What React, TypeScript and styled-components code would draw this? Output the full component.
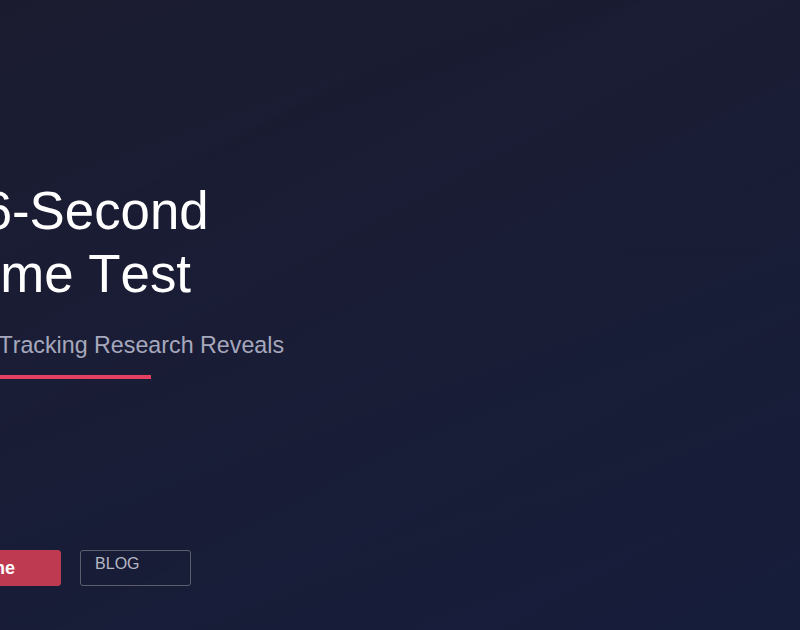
import React from 'react'
import styled, { createGlobalStyle } from 'styled-components'

const GlobalStyle = createGlobalStyle`
  html, body {
    margin: 0;
    padding: 0;
    height: 100%;
    overflow: hidden;
    background: #1a1c33;
  }
  #root {
    height: 100%;
  }
  * {
    box-sizing: border-box;
  }
`

const Hero = styled.section`
  position: relative;
  height: 630px;
  width: 800px;
  overflow: hidden;
  font-family: 'Liberation Sans', Arial, sans-serif;
  font-kerning: none;
  background:
    repeating-linear-gradient(
      -28deg,
      rgba(255, 255, 255, 0) 0px,
      rgba(255, 255, 255, 0) 70px,
      rgba(0, 0, 0, 0.02) 70px,
      rgba(0, 0, 0, 0.02) 140px
    ),
    linear-gradient(160deg, #1b1c30 0%, #191d36 50%, #161d3b 100%);
`

const Content = styled.div`
  display: flex;
  flex-direction: column;
  align-items: flex-start;
  margin-left: -123px;
  padding-top: 179px;
`

const Title = styled.h1`
  margin: 0;
  font-size: 52.8px;
  line-height: 63.4px;
  font-weight: 400;
  color: #ffffff;
`

const Subtitle = styled.p`
  margin: 26px 0 0;
  font-size: 23.25px;
  line-height: 27.6px;
  color: #a6a8bd;
`

const Accent = styled.div`
  margin-top: 16px;
  width: 274px;
  height: 4px;
  background: #e4405f;
`

const Actions = styled.div`
  display: flex;
  gap: 19px;
  margin-top: 171px;
`

const Button = styled.a<{ $primary?: boolean }>`
  display: flex;
  align-items: ${(p) => (p.$primary ? 'center' : 'flex-start')};
  height: 36px;
  padding: ${(p) => (p.$primary ? '0 45px 0 12px' : '4px 50px 0 14px')};
  border-radius: 3px;
  text-decoration: none;
  font-size: ${(p) => (p.$primary ? '18px' : '16px')};
  font-weight: ${(p) => (p.$primary ? 700 : 400)};
  color: ${(p) => (p.$primary ? '#ffffff' : '#b6b8c4')};
  background: ${(p) => (p.$primary ? '#bd3a51' : 'transparent')};
  border: 1px solid ${(p) => (p.$primary ? '#bd3a51' : '#5c5e6b')};
`

export default function App() {
  return (
    <>
      <GlobalStyle />
      <Hero>
        <Content>
          <Title>
            The 6-Second
            <br />
            Resume Test
          </Title>
          <Subtitle>Expert Eye-Tracking Research Reveals</Subtitle>
          <Accent />
          <Actions>
            <Button $primary href="#">Score Resume</Button>
            <Button href="#">BLOG</Button>
          </Actions>
        </Content>
      </Hero>
    </>
  )
}
